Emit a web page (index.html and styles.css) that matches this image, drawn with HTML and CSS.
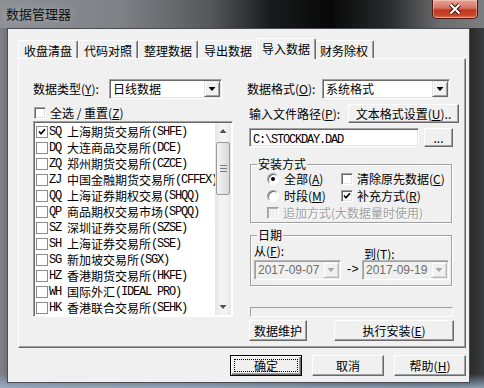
FILE: index.html
```html
<!DOCTYPE html>
<html lang="zh-CN">
<head>
    <meta charset="UTF-8">
    <meta name="viewport" content="width=device-width, initial-scale=1.0">
    <title>数据管理器</title>
    <link rel="stylesheet" href="styles.css">
</head>
<body>
    <div class="window">
        <div class="titlebar">
            <span class="title">数据管理器</span>
            <div class="close">
                <svg width="14" height="12" viewBox="0 0 14 12">
                    <path d="M2.5 1.5l9 9M11.5 1.5l-9 9" stroke="#3b1710" stroke-width="4"/>
                    <path d="M2.5 1.5l9 9M11.5 1.5l-9 9" stroke="#fff" stroke-width="2"/>
                </svg>
            </div>
        </div>

        <div class="client">
            <div class="tabs">
                <div class="tab">收盘清盘</div>
                <div class="tab">代码对照</div>
                <div class="tab">整理数据</div>
                <div class="tab">导出数据</div>
                <div class="tab active">导入数据</div>
                <div class="tab">财务除权</div>
            </div>

            <div class="panel">
                <!-- left: market list -->
                <div class="col-left">
                    <div class="row">
                        <span class="lbl-type">数据类型(<u>Y</u>):</span>
                        <div class="combo w-type"><span class="val">日线数据</span><span class="drop"></span></div>
                    </div>
                    <div class="check-row">
                        <span class="cb"></span>
                        <span>全选 / 重置(<u>Z</u>)</span>
                    </div>
                    <div class="list">
                        <div class="items">
                            <div class="item"><span class="lb"><svg width="8" height="8" viewBox="0 0 8 8"><path d="M1 3.5l2 2.2L7 1.3" fill="none" stroke="#000" stroke-width="1.7"/></svg></span><span class="m code">SQ</span>上海期货交易所<span class="m">(SHFE)</span></div>
                            <div class="item"><span class="lb"></span><span class="m code">DQ</span>大连商品交易所<span class="m">(DCE)</span></div>
                            <div class="item"><span class="lb"></span><span class="m code">ZQ</span>郑州期货交易所<span class="m">(CZCE)</span></div>
                            <div class="item"><span class="lb"></span><span class="m code">ZJ</span>中国金融期货交易所<span class="m">(CFFEX)</span></div>
                            <div class="item"><span class="lb"></span><span class="m code">QQ</span>上海证券期权交易<span class="m">(SHQQ)</span></div>
                            <div class="item"><span class="lb"></span><span class="m code">QP</span>商品期权交易市场<span class="m">(SPQQ)</span></div>
                            <div class="item"><span class="lb"></span><span class="m code">SZ</span>深圳证券交易所<span class="m">(SZSE)</span></div>
                            <div class="item"><span class="lb"></span><span class="m code">SH</span>上海证券交易所<span class="m">(SSE)</span></div>
                            <div class="item"><span class="lb"></span><span class="m code">SG</span>新加坡交易所<span class="m">(SGX)</span></div>
                            <div class="item"><span class="lb"></span><span class="m code">HZ</span>香港期货交易所<span class="m">(HKFE)</span></div>
                            <div class="item"><span class="lb"></span><span class="m code">WH</span>国际外汇<span class="m">(IDEAL PRO)</span></div>
                            <div class="item"><span class="lb"></span><span class="m code">HK</span>香港联合交易所<span class="m">(SEHK)</span></div>
                        </div>
                        <div class="vscroll">
                            <div class="sarrow up"></div>
                            <div class="thumb"></div>
                            <div class="track"></div>
                            <div class="sarrow down"></div>
                        </div>
                    </div>
                </div>

                <!-- right: import options -->
                <div class="col-right">
                    <div class="row">
                        <span class="lbl-fmt">数据格式(<u>O</u>):</span>
                        <div class="combo w-fmt"><span class="val">系统格式</span><span class="drop"></span></div>
                    </div>
                    <div class="row row-path">
                        <span class="lbl-path">输入文件路径(<u>P</u>):</span>
                        <button class="btn btn-textfmt">文本格式设置(<u>U</u>)..</button>
                    </div>
                    <div class="row row-file">
                        <div class="field"><span class="m">C:\STOCKDAY.DAD</span></div>
                        <button class="btn btn-dots">...</button>
                    </div>

                    <fieldset class="group">
                        <legend>安装方式</legend>
                        <div class="grow">
                            <span class="opt"><span class="radio on"></span>全部(<u>A</u>)</span>
                            <span class="opt"><span class="cb"></span>清除原先数据(<u>C</u>)</span>
                        </div>
                        <div class="grow">
                            <span class="opt"><span class="radio"></span>时段(<u>M</u>)</span>
                            <span class="opt"><span class="cb"><svg width="8" height="8" viewBox="0 0 8 8"><path d="M1 3.5l2 2.2L7 1.3" fill="none" stroke="#000" stroke-width="1.7"/></svg></span>补充方式(<u>R</u>)</span>
                        </div>
                        <div class="grow">
                            <span class="opt dis-text"><span class="cb dis"></span>追加方式(大数据量时使用)</span>
                        </div>
                    </fieldset>

                    <fieldset class="group group-date">
                        <legend>日期</legend>
                        <div class="date-labels">
                            <span class="from">从(<u>F</u>):</span>
                            <span class="to">到(<u>T</u>):</span>
                        </div>
                        <div class="date-row">
                            <div class="combo dcombo"><span class="val">2017-09-07</span><span class="drop dis"></span></div>
                            <span class="to-arrow m">-&gt;</span>
                            <div class="combo dcombo"><span class="val">2017-09-19</span><span class="drop dis"></span></div>
                        </div>
                    </fieldset>

                    <div class="progress"></div>

                    <div class="row row-actions">
                        <button class="btn btn-maint">数据维护</button>
                        <button class="btn btn-exec">执行安装(<u>E</u>)</button>
                    </div>
                </div>
            </div>

            <div class="footer">
                <button class="btn btn-foot default"><span class="focus">确定</span></button>
                <button class="btn btn-foot">取消</button>
                <button class="btn btn-foot">帮助(<u>H</u>)</button>
            </div>
        </div>
    </div>
</body>
</html>
```

FILE: styles.css
```css
* {
    box-sizing: border-box;
}

body {
    margin: 0;
    font-family: "Noto Sans CJK SC", sans-serif;
    font-size: 12px;
    line-height: 16px;
    color: #000;
    background: #2a2c2e;
}

u {
    text-decoration: underline;
    text-underline-offset: 1px;
}

.m {
    font-family: "Liberation Mono", monospace;
    font-size: 12px;
    letter-spacing: -1.2px;
}

.code {
    margin-right: 6px;
}

/* window frame */
.window {
    width: 484px;
    height: 388px;
    display: flex;
    flex-direction: column;
    background:
        linear-gradient(to bottom, rgba(160, 185, 210, 0) 374px, rgba(160, 185, 210, 0.8) 388px),
        linear-gradient(to right, #7f8388 0, #6a6e73 10px, #55595e 180px, #25272a 340px, #1e1f21 460px, #3a3c3e 484px);
}

.titlebar {
    height: 28px;
    flex-shrink: 0;
    display: flex;
    align-items: flex-start;
    background: linear-gradient(to right, #8d9195 0, #7e8286 120px, #55585b 210px, #1a1b1c 270px, #080808 330px, #2a2b2c 390px, #6a6c6e 440px, #7b7d7f 484px);
}

.title {
    margin: 6px 0 0 6px;
    font-size: 13px;
    line-height: 16px;
    color: #101010;
    text-shadow: 0 0 8px rgba(255, 255, 255, 0.4);
}

.close {
    margin-left: auto;
    margin-right: 6px;
    width: 46px;
    height: 19px;
    border: 1px solid #4a1a12;
    border-top: none;
    border-radius: 0 0 5px 5px;
    background: linear-gradient(to bottom, #e7a497 0, #d47462 45%, #c4361d 55%, #c8452c 85%, #e07a55 100%);
    box-shadow: inset 0 0 0 1px rgba(255, 220, 210, 0.45);
    display: flex;
    align-items: center;
    justify-content: center;
}

.client {
    flex: 1;
    margin: 0 14px 5px 7px;
    border: 1px solid #4a4e53;
    background: #f0f0f0;
    padding: 9px 3px 0 10px;
    display: flex;
    flex-direction: column;
}

/* tabs */
.tabs {
    display: flex;
    align-items: flex-end;
    height: 20px;
}

.tab {
    position: relative;
    height: 18px;
    padding: 3px 5px 0;
    line-height: 14px;
    border: 1px solid #fff;
    border-bottom: none;
    border-right-color: #696969;
    border-radius: 2px 2px 0 0;
    box-shadow: inset -1px 0 #a0a0a0;
}

.tab.active {
    height: 21px;
    margin: 0 -2px -1px;
    z-index: 1;
    background: #f0f0f0;
}

.panel {
    height: 290px;
    border: 1px solid;
    border-color: #fff #696969 #696969 #fff;
    box-shadow: inset -1px -1px #a0a0a0;
    padding: 20px 0 0 14px;
    display: flex;
    align-items: flex-start;
}

/* common controls */
.row {
    display: flex;
    align-items: center;
    height: 20px;
}

.combo {
    display: flex;
    height: 20px;
    padding: 1px;
    border: 1px solid;
    border-color: #a0a0a0 #fff #fff #a0a0a0;
    box-shadow: inset 1px 1px #696969, inset -1px -1px #e3e3e3;
    background: #fff;
}

.combo .val {
    flex: 1;
    padding-left: 2px;
    line-height: 16px;
    white-space: nowrap;
    overflow: hidden;
}

.drop {
    width: 16px;
    height: 16px;
    flex: none;
    background: #f0f0f0;
    border: 1px solid;
    border-color: #e3e3e3 #696969 #696969 #e3e3e3;
    box-shadow: inset 1px 1px #fff, inset -1px -1px #a0a0a0;
    display: flex;
    align-items: center;
    justify-content: center;
}

.drop::after {
    content: "";
    width: 7px;
    height: 4px;
    background: #000;
    clip-path: polygon(0 0, 100% 0, 50% 100%);
}

.drop.dis {
    border-color: #f0f0f0 #b4b4b4 #b4b4b4 #f0f0f0;
    box-shadow: inset 1px 1px #fff, inset -1px -1px #d8d8d8;
}

.drop.dis::after {
    background: #a8a8a8;
}

.cb {
    width: 12px;
    height: 12px;
    flex: none;
    background: #fff;
    border: 1px solid;
    border-color: #a0a0a0 #fff #fff #a0a0a0;
    box-shadow: inset 1px 1px #696969, inset -1px -1px #e3e3e3;
    display: flex;
    align-items: center;
    justify-content: center;
    margin-right: 4px;
}

.cb.dis {
    background: #f0f0f0;
    box-shadow: inset 1px 1px #b0b0b0;
}

.radio {
    width: 12px;
    height: 12px;
    flex: none;
    border-radius: 50%;
    background: #fff;
    border: 1px solid;
    border-color: #a0a0a0 #fff #fff #a0a0a0;
    box-shadow: inset 1px 1px #696969;
    display: flex;
    align-items: center;
    justify-content: center;
    margin-right: 5px;
}

.radio.on::after {
    content: "";
    width: 4px;
    height: 4px;
    border-radius: 50%;
    background: #000;
}

.dis-text {
    color: #a0a0a0;
    text-shadow: 1px 1px #fff;
}

.btn {
    height: 21px;
    padding: 0;
    font: inherit;
    color: #000;
    background: #f0f0f0;
    border: 1px solid;
    border-color: #fff #696969 #696969 #fff;
    box-shadow: inset -1px -1px #a0a0a0;
    white-space: nowrap;
}

.btn.default {
    padding: 3px;
    border-color: #000;
    box-shadow: inset 1px 1px #fff, inset -1px -1px #696969, inset -2px -2px #a0a0a0;
}

.btn .focus {
    display: block;
    height: 100%;
    line-height: 11px;
    border: 1px dotted #000;
}

/* left column */
.col-left {
    width: 200px;
}

.lbl-type {
    width: 76px;
}

.w-type {
    width: 113px;
}

.check-row {
    display: flex;
    align-items: center;
    height: 14px;
    margin-top: 7px;
    padding-left: 1px;
}

.list {
    display: flex;
    height: 196px;
    margin-top: 1px;
    padding: 1px;
    border: 1px solid;
    border-color: #a0a0a0 #fff #fff #a0a0a0;
    box-shadow: inset 1px 1px #696969;
    background: #fff;
}

.items {
    flex: 1;
    padding-top: 1px;
    overflow: hidden;
}

.item {
    display: flex;
    align-items: center;
    height: 16px;
    padding-left: 1px;
    white-space: nowrap;
}

.lb {
    width: 12px;
    height: 12px;
    flex: none;
    border: 1px solid #8a8a8a;
    background: #fff;
    margin-right: 1px;
    display: flex;
    align-items: center;
    justify-content: center;
}

.vscroll {
    width: 16px;
    flex: none;
    display: flex;
    flex-direction: column;
    background: linear-gradient(to right, #e4e4e4, #f3f3f3 35%, #f3f3f3 70%, #e6e6e6);
}

.sarrow {
    height: 16px;
    display: flex;
    align-items: center;
    justify-content: center;
}

.sarrow::after {
    content: "";
    width: 7px;
    height: 4px;
    background: #505050;
}

.sarrow.up::after {
    clip-path: polygon(50% 0, 100% 100%, 0 100%);
}

.sarrow.down::after {
    clip-path: polygon(0 0, 100% 0, 50% 100%);
}

.thumb {
    height: 53px;
    margin: 3px 1px 0;
    border: 1px solid #9a9a9a;
    border-radius: 2px;
    background: linear-gradient(to right, #f4f4f4, #e6e6e6 50%, #d9d9d9);
    display: flex;
    align-items: center;
    justify-content: center;
}

.thumb::after {
    content: "";
    width: 7px;
    height: 7px;
    background: repeating-linear-gradient(to bottom, #7a7a7a 0 1px, transparent 1px 3px);
}

.track {
    flex: 1;
}

/* right column */
.col-right {
    width: 212px;
    margin-left: 14px;
    display: flex;
    flex-direction: column;
    align-items: flex-start;
}

.lbl-fmt {
    width: 75px;
}

.w-fmt {
    width: 128px;
}

.row-path {
    height: 19px;
    margin-top: 5px;
    padding-left: 2px;
}

.lbl-path {
    width: 99px;
}

.btn-textfmt {
    width: 111px;
    height: 19px;
}

.row-file {
    height: 19px;
    margin-top: 5px;
    padding-left: 2px;
}

.field {
    width: 170px;
    height: 19px;
    padding: 1px 3px;
    line-height: 15px;
    border: 1px solid;
    border-color: #a0a0a0 #fff #fff #a0a0a0;
    box-shadow: inset 1px 1px #696969, inset -1px -1px #e3e3e3;
    background: #fff;
}

.btn-dots {
    width: 29px;
    height: 19px;
    margin-left: 5px;
}

.group {
    margin: 11px 0 0 3px;
    width: 202px;
    min-width: 0;
    padding: 0 0 1px;
    border: 1px solid #a0a0a0;
    box-shadow: 1px 1px #fff, inset 1px 1px #fff;
}

.group legend {
    margin-left: 6px;
    padding: 0 1px;
    line-height: 12px;
    background: #f0f0f0;
}

.grow {
    display: grid;
    grid-template-columns: 74px auto;
    align-items: center;
    height: 17px;
    padding-left: 16px;
}

.opt {
    display: flex;
    align-items: center;
    white-space: nowrap;
}

.group-date {
    margin-top: 6px;
    padding-bottom: 5px;
}

.date-labels {
    display: flex;
    height: 14px;
    margin-top: 3px;
    padding-left: 3px;
    line-height: 14px;
}

.date-labels .from {
    width: 110px;
}

.date-labels .to {
    margin-top: 3px;
}

.date-row {
    display: flex;
    align-items: center;
    margin-top: 2px;
    padding-left: 3px;
}

.dcombo {
    width: 87px;
    background: #f0f0f0;
    border-color: #b4b4b4 #fff #fff #b4b4b4;
    box-shadow: inset 1px 1px #a0a0a0;
}

.dcombo .val {
    font-family: "Liberation Sans", sans-serif;
    color: #6d6d6d;
}

.to-arrow {
    width: 21px;
    text-align: center;
}

.progress {
    margin: 21px 0 0 3px;
    width: 203px;
    height: 10px;
    border: 1px solid;
    border-color: #a0a0a0 #fff #fff #a0a0a0;
}

.row-actions {
    height: 21px;
    margin-top: 3px;
    padding-left: 2px;
}

.btn-maint {
    width: 58px;
}

.btn-exec {
    width: 120px;
    margin-left: 27px;
}

/* dialog buttons */
.footer {
    display: flex;
    justify-content: flex-end;
    gap: 10px;
    margin-top: 7px;
}

.btn-foot {
    width: 72px;
}
```
